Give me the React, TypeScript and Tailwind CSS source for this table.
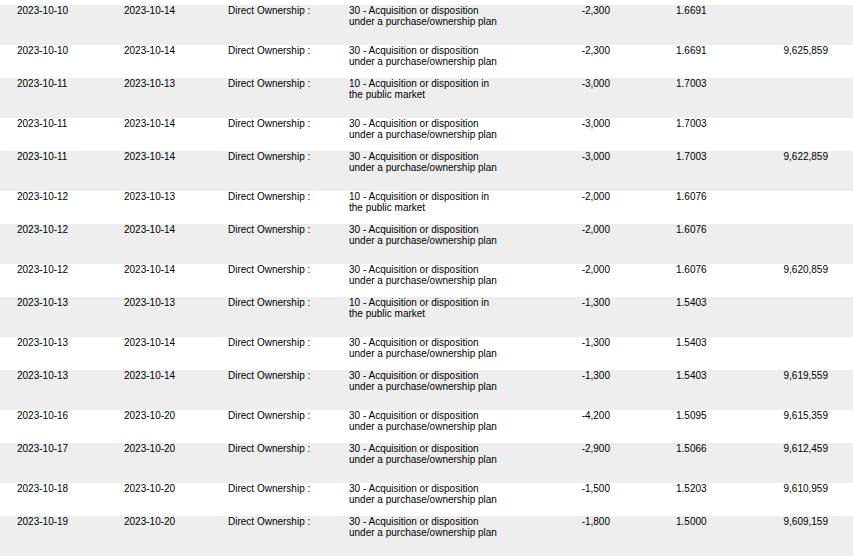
const code30 = ["30 - Acquisition or disposition", "under a purchase/ownership plan"];
const code10 = ["10 - Acquisition or disposition in", "the public market"];

const rows = [
  { trade: "2023-10-10", filed: "2023-10-14", code: code30, qty: "-2,300", price: "1.6691", held: "" },
  { trade: "2023-10-10", filed: "2023-10-14", code: code30, qty: "-2,300", price: "1.6691", held: "9,625,859" },
  { trade: "2023-10-11", filed: "2023-10-13", code: code10, qty: "-3,000", price: "1.7003", held: "" },
  { trade: "2023-10-11", filed: "2023-10-14", code: code30, qty: "-3,000", price: "1.7003", held: "" },
  { trade: "2023-10-11", filed: "2023-10-14", code: code30, qty: "-3,000", price: "1.7003", held: "9,622,859" },
  { trade: "2023-10-12", filed: "2023-10-13", code: code10, qty: "-2,000", price: "1.6076", held: "" },
  { trade: "2023-10-12", filed: "2023-10-14", code: code30, qty: "-2,000", price: "1.6076", held: "" },
  { trade: "2023-10-12", filed: "2023-10-14", code: code30, qty: "-2,000", price: "1.6076", held: "9,620,859" },
  { trade: "2023-10-13", filed: "2023-10-13", code: code10, qty: "-1,300", price: "1.5403", held: "" },
  { trade: "2023-10-13", filed: "2023-10-14", code: code30, qty: "-1,300", price: "1.5403", held: "" },
  { trade: "2023-10-13", filed: "2023-10-14", code: code30, qty: "-1,300", price: "1.5403", held: "9,619,559" },
  { trade: "2023-10-16", filed: "2023-10-20", code: code30, qty: "-4,200", price: "1.5095", held: "9,615,359" },
  { trade: "2023-10-17", filed: "2023-10-20", code: code30, qty: "-2,900", price: "1.5066", held: "9,612,459" },
  { trade: "2023-10-18", filed: "2023-10-20", code: code30, qty: "-1,500", price: "1.5203", held: "9,610,959" },
  { trade: "2023-10-19", filed: "2023-10-20", code: code30, qty: "-1,800", price: "1.5000", held: "9,609,159" },
];

export default function App() {
  return (
    <div className="w-[853px] h-[556px] overflow-hidden bg-white pt-[5px] text-[10px] leading-[11px] text-black font-['Liberation_Sans',Arial,sans-serif]">
      {rows.map((r, i) => (
        <div
          key={i}
          className={
            i % 2 === 0
              ? "grid grid-cols-[124px_104px_121px_160px_101px_130px_1fr] h-[40px] bg-[#eeeeee]"
              : "grid grid-cols-[124px_104px_121px_160px_101px_130px_1fr] h-[33px] bg-white"
          }
        >
          <div className="pl-[17px]">{r.trade}</div>
          <div>{r.filed}</div>
          <div>Direct Ownership :</div>
          <div className="pr-[8px]">
            {r.code[0]}
            <br />
            {r.code[1]}
          </div>
          <div className="text-right">{r.qty}</div>
          <div className="pl-[66px]">{r.price}</div>
          <div className="text-right pr-[25px]">{r.held}</div>
        </div>
      ))}
    </div>
  );
}
